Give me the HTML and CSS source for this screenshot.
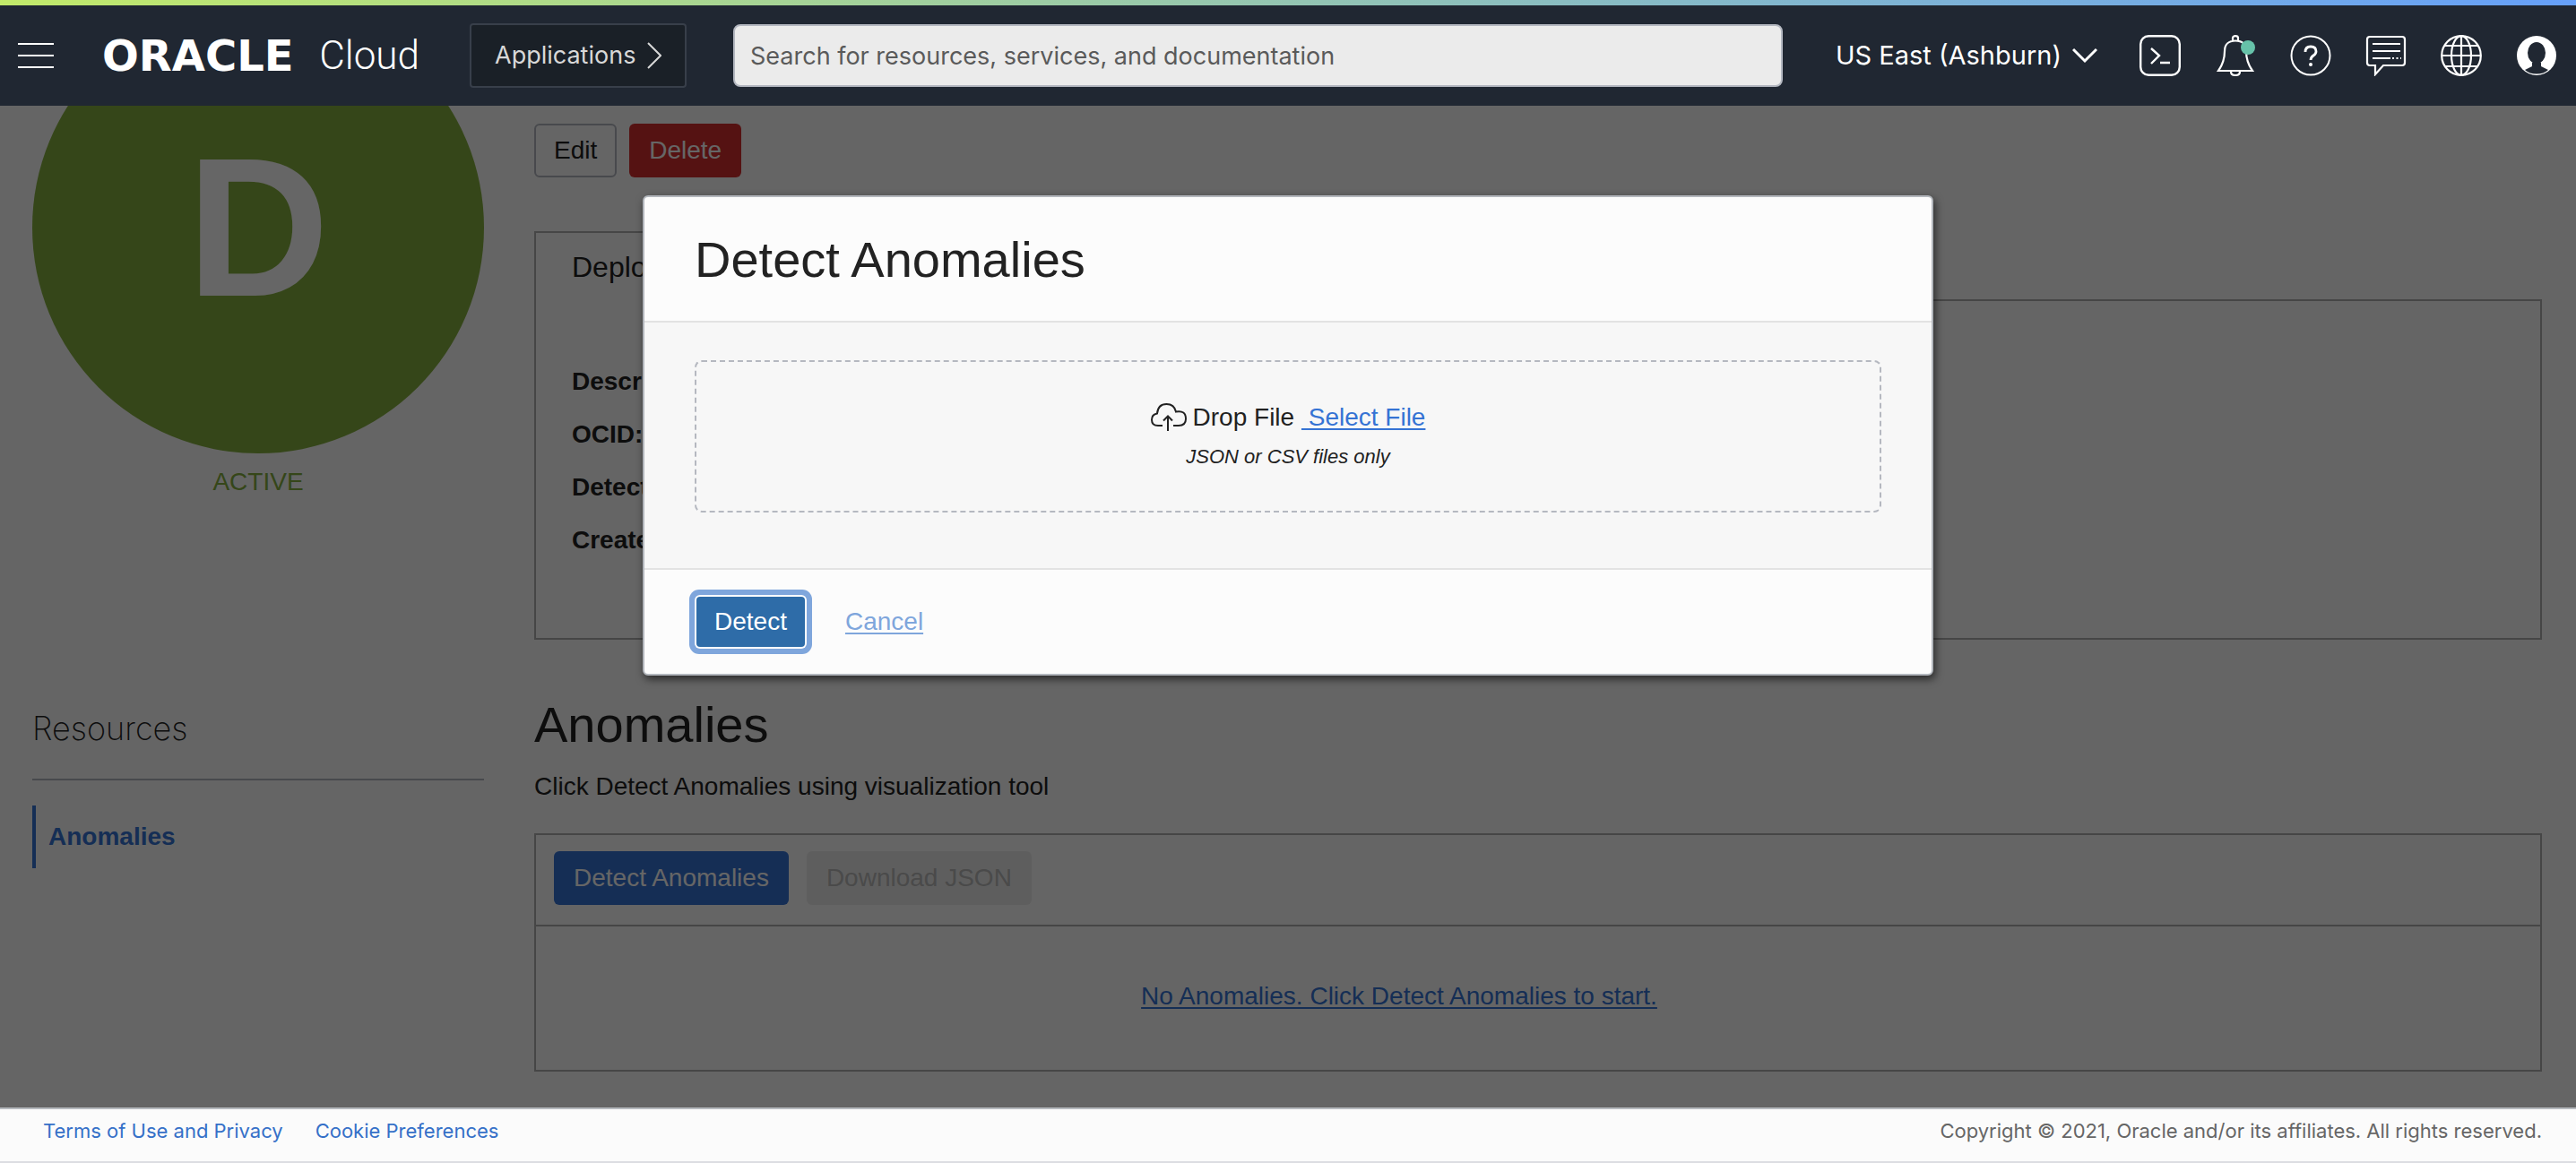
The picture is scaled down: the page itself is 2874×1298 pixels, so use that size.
FILE: index.html
```html
<!DOCTYPE html>
<html lang="en">
<head>
<meta charset="utf-8">
<title>Detect Anomalies</title>
<link rel="stylesheet" href="styles.css">
</head>
<body>
<header class="topbar">
  <button class="icon-btn menu" aria-label="Navigation menu">
    <svg width="40" height="28" viewBox="0 0 40 28" fill="none" stroke="#fff" stroke-width="2"><path d="M0 1H40M0 14H40M0 27H40"/></svg>
  </button>
  <a class="brand" href="#"><span class="brand-name">ORACLE</span><span class="brand-product">Cloud</span></a>
  <button class="apps">Applications
    <svg width="16" height="30" viewBox="0 0 16 30" fill="none" stroke="currentColor" stroke-width="2"><path d="M1 1L15 15L1 29"/></svg>
  </button>
  <input class="search" type="search" aria-label="Search" placeholder="Search for resources, services, and documentation">
  <div class="tools">
    <button class="region">US East (Ashburn)
      <svg width="28" height="18" viewBox="0 0 28 18" fill="none" stroke="#fff" stroke-width="3"><path d="M1 2L14 15L27 2"/></svg>
    </button>
    <button class="icon-btn" aria-label="Cloud Shell">
      <svg width="46" height="46" viewBox="0 0 46 46" fill="none" stroke="#fff" stroke-width="2.4"><rect x="1.2" y="1.2" width="43.6" height="43.6" rx="9"/><path d="M13 15L22 23L13 32M23 31H34"/></svg>
    </button>
    <button class="icon-btn" aria-label="Announcements">
      <svg width="46" height="46" viewBox="0 0 46 46" fill="none" stroke="#fff" stroke-width="2.2"><path d="M20 7V3.5Q20 1.2 23 1.2T26 3.5V7M4 40C9 33 11 27 11 18C11 10 16 6.5 23 6.5S35 10 35 18C35 27 37 33 42 40ZM18 41Q18 45 23 45T28 41"/><circle cx="37" cy="14" r="8" fill="#66c2a9" stroke="none"/></svg>
    </button>
    <button class="icon-btn" aria-label="Help">
      <svg width="46" height="46" viewBox="0 0 46 46" fill="none" stroke="#fff" stroke-width="2"><circle cx="23" cy="23" r="21.5"/><path stroke-width="2.8" d="M17 19Q17 13 23 13T29 18.500Q29 21 26 23T23 28"/><circle cx="23" cy="33" r="2" fill="#fff" stroke="none"/></svg>
    </button>
    <button class="icon-btn" aria-label="Chat">
      <svg width="46" height="46" viewBox="0 0 46 46" fill="none" stroke="#fff" stroke-width="2.2"><path d="M5 2H41Q44 2 44 5V31Q44 34 41 34H20L11 44V34H5Q2 34 2 31V5Q2 2 5 2Z"/><path d="M8 10H39M8 18H39M8 26H28"/><path stroke-dasharray="2 2.500" d="M30 26H40"/></svg>
    </button>
    <button class="icon-btn" aria-label="Language">
      <svg width="46" height="46" viewBox="0 0 46 46" fill="none" stroke="#fff" stroke-width="2.2"><circle cx="23" cy="23" r="21.800"/><ellipse cx="23" cy="23" rx="11" ry="21.800"/><path d="M23 1V45M1 23H45M5 12H41M5 35H41"/></svg>
    </button>
    <button class="icon-btn" aria-label="Profile">
      <svg width="46" height="46" viewBox="0 0 46 46"><circle cx="23" cy="23" r="22" fill="#fff"/><ellipse cx="23" cy="20" rx="10" ry="12" fill="#202732"/><path d="M18 31H28V35Q32 37 36 39Q31 43.500 23 43.500T10 39Q14 37 18 35Z" fill="#202732"/></svg>
    </button>
  </div>
</header>

<main class="page">
  <aside class="side">
    <div class="avatar">D</div>
    <p class="status">ACTIVE</p>
    <h2 class="side-title">Resources</h2>
    <nav><a class="side-link" href="#">Anomalies</a></nav>
  </aside>
  <section class="content">
    <div class="actions">
      <button class="btn outline">Edit</button>
      <button class="btn danger">Delete</button>
    </div>
    <div class="tab">Deploy</div>
    <div class="panel">
      <dl class="facts">
        <dt>Descr:</dt>
        <dt>OCID:</dt>
        <dt>Detector:</dt>
        <dt>Created:</dt>
      </dl>
    </div>
    <h1 class="title">Anomalies</h1>
    <p class="hint">Click Detect Anomalies using visualization tool</p>
    <div class="results">
      <div class="results-bar">
        <button class="btn primary">Detect Anomalies</button>
        <button class="btn muted" disabled>Download JSON</button>
      </div>
      <p class="empty"><a class="link" href="#">No Anomalies. Click Detect Anomalies to start.</a></p>
    </div>
  </section>

  <div class="overlay">
    <div class="dialog" role="dialog" aria-modal="true" aria-labelledby="dialog-title">
      <h2 class="dialog-title" id="dialog-title">Detect Anomalies</h2>
      <div class="dialog-body">
        <div class="dropzone">
          <p class="drop-line">
            <svg width="40" height="32" viewBox="0 0 40 32" fill="none" stroke="#222" stroke-width="2"><path d="M13 25H8Q1 25 1 18.500Q1 12.500 7 11.500Q8 1 17.500 1Q26 1 28 9.500Q39 7.500 39 17.500Q39 25 31 25H25M19 31V15M14 19.500L19 14.500L24 19.500"/></svg>
            <span>Drop File <a class="link" href="#">&nbsp;Select File</a></span>
          </p>
          <p class="drop-note">JSON or CSV files only</p>
        </div>
      </div>
      <div class="dialog-foot">
        <button class="btn detect">Detect</button>
        <a class="link cancel" href="#">Cancel</a>
      </div>
    </div>
  </div>
</main>

<footer class="footer">
  <a href="#">Terms of Use and Privacy</a>
  <a href="#">Cookie Preferences</a>
  <span class="copyright">Copyright © 2021, Oracle and/or its affiliates. All rights reserved.</span>
</footer>
</body>
</html>
```
FILE: styles.css
```css
* {
  box-sizing: border-box;
}

body {
  margin: 0;
  min-height: 100vh;
  display: flex;
  flex-direction: column;
  background: #fcfcfc;
  color: #222;
  font: 28px/32px "Liberation Sans", Arial, sans-serif;
}

h1, h2, p, dl {
  margin: 0;
  font-weight: 400;
}

button, input {
  font: inherit;
}

button {
  padding: 0;
  border: 0;
  background: none;
  color: inherit;
}

svg {
  display: block;
  flex: none;
}

/* Top bar */
.topbar {
  display: flex;
  align-items: center;
  height: 118px;
  padding: 6px 21px 0 20px;
  background: linear-gradient(90deg, #c2ea6a, #66a0fa) top / 100% 6px no-repeat #202732;
  color: #fff;
  font-family: Inter, sans-serif;
  font-size: 27px;
}

.brand {
  display: flex;
  align-items: center;
  justify-content: space-between;
  width: 354px;
  margin-left: 54px;
  color: #fff;
  line-height: 48px;
  text-decoration: none;
}

.brand-name {
  font: bold 48px/48px "DejaVu Sans", sans-serif;
}

.brand-product {
  font: 300 44px/48px Roboto, sans-serif;
}

.apps {
  display: flex;
  align-items: center;
  justify-content: space-between;
  flex: none;
  width: 242px;
  height: 72px;
  margin-left: 56px;
  padding: 0 26px;
  border: 2px solid #383f4a;
  border-radius: 4px;
  background: #1a2027;
  color: #d8d8d8;
}

.search {
  flex: 1;
  max-width: 1171px;
  height: 70px;
  margin-left: 52px;
  padding: 0 17px;
  border: 2px solid #b3b7c0;
  border-radius: 8px;
  background: #ebebeb;
}

.search::placeholder {
  color: #5a5a5a;
  opacity: 1;
}

.tools {
  display: flex;
  align-items: center;
  gap: 38px;
  margin-left: auto;
}

.region {
  display: flex;
  align-items: center;
  gap: 12px;
  margin-right: 9px;
  font-size: 29px;
}

/* Page behind the dialog */
.page {
  position: relative;
  flex: 1;
  display: flex;
  gap: 56px;
  padding: 20px 38px 40px 36px;
  overflow: hidden;
}

.side {
  flex: 0 0 504px;
}

.avatar {
  display: grid;
  place-items: center;
  height: 504px;
  margin-top: -136px;
  border-radius: 50%;
  background: #85af3f;
  color: #fff;
  font-size: 220px;
  font-weight: 700;
}

.status {
  margin-top: 16px;
  color: #85af3f;
  text-align: center;
}

.side-title {
  margin: 235px 0 28px;
  padding-bottom: 32px;
  border-bottom: 2px solid #b3b7c0;
  font: 200 36px/48px Inter, sans-serif;
}

.side-link {
  display: block;
  padding: 19px 14px;
  border-left: 4px solid #3573d4;
  color: #3573d4;
  font-weight: 700;
  text-decoration: none;
}

.content {
  flex: 1;
}

.actions {
  display: flex;
  gap: 14px;
}

.btn {
  height: 60px;
  padding: 0 22px;
  border-radius: 6px;
  color: #fff;
}

.outline {
  padding: 0 20px;
  border: 2px solid #b3b7c0;
  color: #222;
}

.danger {
  background: #d42e2e;
}

.primary {
  background: #3573d4;
}

.muted {
  background: #ececec;
  color: #b8b8b8;
}

/* The selected tab covers the panel's top border below it */
.tab {
  position: relative;
  width: 400px;
  height: 78px;
  margin: 60px 0 -2px;
  padding: 20px 40px;
  border: 2px solid #afafaf;
  border-bottom: 0;
  background: #fcfcfc;
  font-size: 32px;
  line-height: 36px;
}

.panel {
  height: 380px;
  padding: 74px 40px;
  border: 2px solid #afafaf;
}

.facts {
  display: grid;
  row-gap: 27px;
  font-weight: 700;
}

.title {
  margin: 63px 0 21px;
  font-size: 56px;
  line-height: 64px;
}

.results {
  margin-top: 36px;
  border: 2px solid #afafaf;
}

.results-bar {
  display: flex;
  gap: 20px;
  padding: 18px 20px 22px;
  border-bottom: 2px solid #afafaf;
}

.empty {
  padding: 62px 310px 66px 0;
  text-align: center;
}

.link {
  color: #3573d4;
  text-decoration-thickness: 2px;
  text-underline-offset: 3px;
}

/* Dialog */
.overlay {
  position: absolute;
  inset: 0;
  display: flex;
  align-items: flex-start;
  justify-content: center;
  padding-top: 100px;
  background: rgba(0, 0, 0, 0.6);
}

.dialog {
  width: 1440px;
  max-width: 90%;
  border: 2px solid #b3b7bd;
  border-radius: 6px;
  background: #fcfcfc;
  box-shadow: 2px 4px 10px rgba(0, 0, 0, 0.6);
}

.dialog-title {
  padding: 38px 56px 36px;
  font-size: 56px;
  line-height: 64px;
}

.dialog-body {
  padding: 42px 56px 62px;
  border: solid #e3e3e3;
  border-width: 2px 0;
  background: #f7f7f7;
}

.dropzone {
  padding: 46px 0 44px;
  border: 2px dashed #b5b8c0;
  border-radius: 8px;
  text-align: center;
}

.drop-line {
  display: flex;
  justify-content: center;
  gap: 7px;
}

.drop-note {
  margin-top: 12px;
  font-size: 22px;
  font-style: italic;
}

.dialog-foot {
  display: flex;
  align-items: center;
  gap: 45px;
  padding: 30px 58px;
}

.detect {
  height: 56px;
  padding: 0 20px;
  border-radius: 4px;
  background: #2e6ca8;
  box-shadow: 0 0 0 2px #fff, 0 0 0 8px #7fa6dc;
}

.cancel {
  color: #7fa6dc;
}

/* Footer */
.footer {
  display: flex;
  gap: 36px;
  height: 62px;
  padding: 8px 38px 0 48px;
  border-top: 2px solid #b5b9bd;
  border-bottom: 2px solid #dcdde2;
  background: #fbfbfb;
  color: #666;
  font: 22px/32px Inter, sans-serif;
}

.footer a {
  color: #3570c8;
  text-decoration: none;
}

.copyright {
  margin-left: auto;
}
```
